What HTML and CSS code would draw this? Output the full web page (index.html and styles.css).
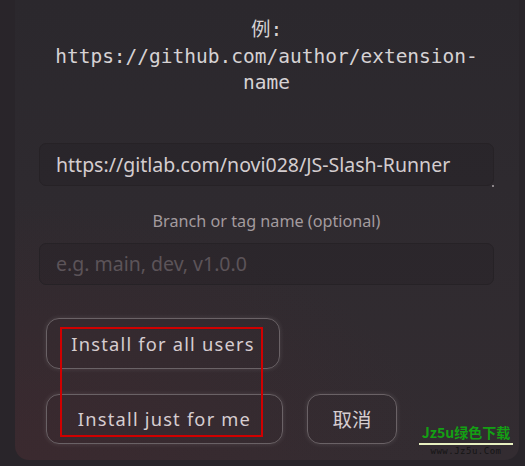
FILE: index.html
```html
<!DOCTYPE html>
<html>
<head>
<meta charset="utf-8">
<link rel="stylesheet" href="styles.css">
</head>
<body>
<div class="panel">
  <div class="example">例:<br>https://github.com/author/extension-<br>name</div>
  <div class="field url">https://gitlab.com/novi028/JS-Slash-Runner</div>
  <div class="label">Branch or tag name (optional)</div>
  <div class="field placeholder">e.g. main, dev, v1.0.0</div>
  <div class="buttons">
    <div class="row">
      <div class="btn wide1">Install for all users</div>
    </div>
    <div class="row">
      <div class="btn wide2">Install just for me</div>
      <div class="btn cancel">取消</div>
    </div>
  </div>
  <div class="annot"></div>
</div>
<div class="watermark">
  <div class="wm-title">Jz5u绿色下载</div>
  <div class="wm-url">www.Jz5u.Com</div>
</div>
</body>
</html>
```
FILE: styles.css
```css
html, body {
  margin: 0;
  padding: 0;
}
body {
  width: 525px;
  height: 466px;
  overflow: hidden;
  background: #29252a;
  position: relative;
  font-family: "Noto Sans", "Noto Sans CJK SC", sans-serif;
}
.panel {
  position: relative;
  margin-left: 15px;
  width: 504px;
  height: 460px;
  box-sizing: border-box;
  border-radius: 0 0 14px 14px;
  background:
    radial-gradient(ellipse 420px 260px at 0% 100%, rgba(70, 38, 44, 0.4), rgba(70, 38, 44, 0) 100%),
    linear-gradient(180deg, #2b282d 0%, #2e2a2f 40%, #332c31 100%);
  padding: 17px 25px 0 24px;
}
.example {
  font-family: "DejaVu Sans Mono", "Noto Sans CJK SC", monospace;
  font-size: 19.5px;
  line-height: 26.5px;
  color: #d6d2d4;
  text-align: center;
}
.field {
  height: 43px;
  box-sizing: border-box;
  border: 1px solid #262226;
  border-radius: 7px;
  background: rgba(30, 26, 30, 0.25);
  padding: 0 16px;
  display: flex;
  align-items: center;
  font-size: 19.5px;
  position: relative;
}
.url {
  margin-top: 46px;
  color: #d4cdcf;
}
.url::after {
  content: "";
  position: absolute;
  right: -1px;
  bottom: -2px;
  width: 2px;
  height: 2px;
  background: #8a8488;
}
.label {
  margin-top: 24px;
  text-align: center;
  font-size: 16.2px;
  color: #a39b9e;
  line-height: 22px;
}
.placeholder {
  margin-top: 11px;
  height: 42px;
  color: #5c5459;
}
.buttons {
  margin-top: 33px;
  padding-left: 7px;
  display: flex;
  flex-direction: column;
  gap: 25px;
}
.row {
  display: flex;
  gap: 24px;
}
.btn {
  height: 51px;
  box-sizing: border-box;
  border: 1.5px solid #6a6266;
  border-radius: 13px;
  box-shadow: 0 0 5px rgba(255, 255, 255, 0.12);
  display: flex;
  align-items: center;
  justify-content: center;
  color: #d6cdd0;
  font-size: 18.3px;
  letter-spacing: 1.2px;
}
.wide1 { width: 234px; }
.wide2 { width: 237px; height: 50px; }
.cancel { width: 90px; height: 50px; font-family: "Noto Sans CJK SC", sans-serif; font-size: 19.5px; letter-spacing: 0; }
.annot {
  position: absolute;
  left: 45px;
  top: 327px;
  width: 203px;
  height: 110px;
  box-sizing: border-box;
  border: 2px solid #d00000;
}
.watermark {
  position: absolute;
  left: 419px;
  top: 424px;
  width: 94px;
  text-align: center;
  white-space: nowrap;
}
.wm-title {
  font-family: "Noto Sans CJK SC", sans-serif;
  font-weight: bold;
  color: #14a014;
  font-size: 14px;
  line-height: 17px;
  border-bottom: 2px solid #e8f0c0;
  padding-bottom: 2px;
}
.wm-url {
  font-family: "DejaVu Sans Mono", monospace;
  font-size: 9px;
  color: #151515;
  line-height: 12px;
  letter-spacing: 0.5px;
}
```
